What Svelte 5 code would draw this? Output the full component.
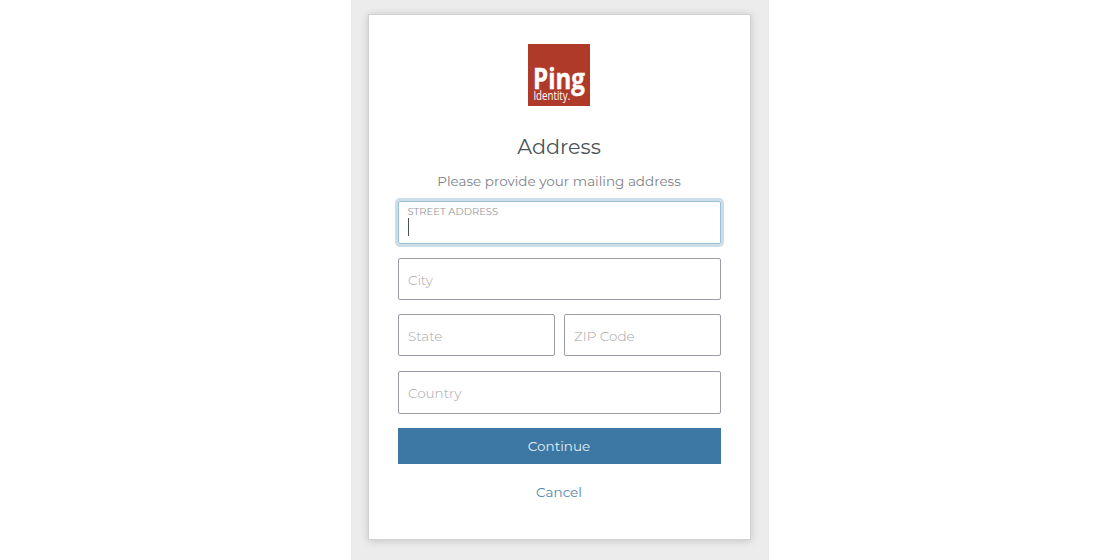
<script>
  let street = $state('');
</script>

<main>
  <section class="card">
    <svg class="logo" width="62" height="62" viewBox="0 0 62 62" role="img" aria-label="Ping Identity">
      <rect width="62" height="62" fill="#b03a2a" />
      <text class="ping" x="5" y="44.6" textLength="52" lengthAdjust="spacingAndGlyphs">Ping</text>
      <text class="identity" x="5.4" y="56.2" textLength="36.8" lengthAdjust="spacingAndGlyphs">Identity.</text>
    </svg>
    <h1>Address</h1>
    <p>Please provide your mailing address</p>
    <form onsubmit={(event) => event.preventDefault()}>
      <label class="field focused">
        <span class="float">STREET ADDRESS</span>
        <span class="value">{street}<i class="caret"></i></span>
      </label>
      <div class="field"><span>City</span></div>
      <div class="row">
        <div class="field"><span>State</span></div>
        <div class="field"><span>ZIP Code</span></div>
      </div>
      <div class="field last"><span>Country</span></div>
      <button type="submit"><span>Continue</span></button>
    </form>
    <a href="#cancel">Cancel</a>
  </section>
</main>

<style>
  :global(body) {
    margin: 0;
    background: #fff;
    overflow: hidden;
  }
  main {
    box-sizing: border-box;
    width: 418px;
    height: 560px;
    margin-left: 351px;
    padding: 15px 19px 0 18px;
    background: #ececec;
    font-family: Montserrat, Inter, sans-serif;
    overflow: hidden;
  }
  .card {
    box-sizing: border-box;
    width: 381px;
    height: 524px;
    padding: 29px 29px 0;
    background: #fff;
    box-shadow: 0 0 0 1px #d2d2d2, 0 1px 8px 1px rgba(0, 0, 0, 0.17);
    display: flex;
    flex-direction: column;
    align-items: center;
  }
  .logo {
    display: block;
    flex: none;
    margin-right: 1px;
  }
  .ping {
    font: 700 28px "Open Sans", sans-serif;
    fill: #fff;
    stroke: #fff;
    stroke-width: 0.4px;
  }
  .identity {
    font: 400 12px "Open Sans", sans-serif;
    fill: #fff;
  }
  h1 {
    margin: 26px 0 0;
    font-size: 20.7px;
    font-weight: 400;
    line-height: 30px;
    color: #4b5359;
    margin-right: 1px;
  }
  p {
    margin: 9px 1px 0 0;
    font-size: 13.5px;
    line-height: 20px;
    color: #7d8389;
    white-space: nowrap;
  }
  form {
    width: 323px;
    margin-top: 11px;
    display: flex;
    flex-direction: column;
    gap: 14px;
  }
  .field {
    box-sizing: border-box;
    height: 42px;
    padding: 3px 9px 0;
    border: 1px solid #9a9da5;
    border-radius: 2px;
    font-size: 13.5px;
    font-weight: 300;
    line-height: 37px;
    color: #a5a8ac;
  }
  .focused {
    height: 43px;
    margin-top: -1px;
    padding: 4px 9px 0;
    border-color: #9bbfd6;
    box-shadow: 0 0 0 3px #cbdde8;
    display: flex;
    flex-direction: column;
  }
  .float {
    font-size: 10px;
    font-weight: 400;
    line-height: 12px;
    color: #94979b;
    margin-left: -0.5px;
  }
  .value {
    height: 18px;
    line-height: 18px;
    display: flex;
  }
  .caret {
    width: 1px;
    height: 18px;
    background: #4b5359;
  }
  .row {
    display: grid;
    grid-template-columns: 157px 157px;
    gap: 9px;
  }
  .last {
    height: 43px;
    margin-top: 1px;
  }
  button {
    width: 323px;
    height: 36px;
    padding: 0 1px 0 0;
    border: 0;
    background: #3d77a3;
    color: #e6eef4;
    font: 400 13.5px/36px Montserrat, Inter, sans-serif;
  }
  a {
    margin: 18px 1px 0 0;
    font-size: 13.5px;
    line-height: 20px;
    color: #5286ad;
    text-decoration: none;
  }
</style>
